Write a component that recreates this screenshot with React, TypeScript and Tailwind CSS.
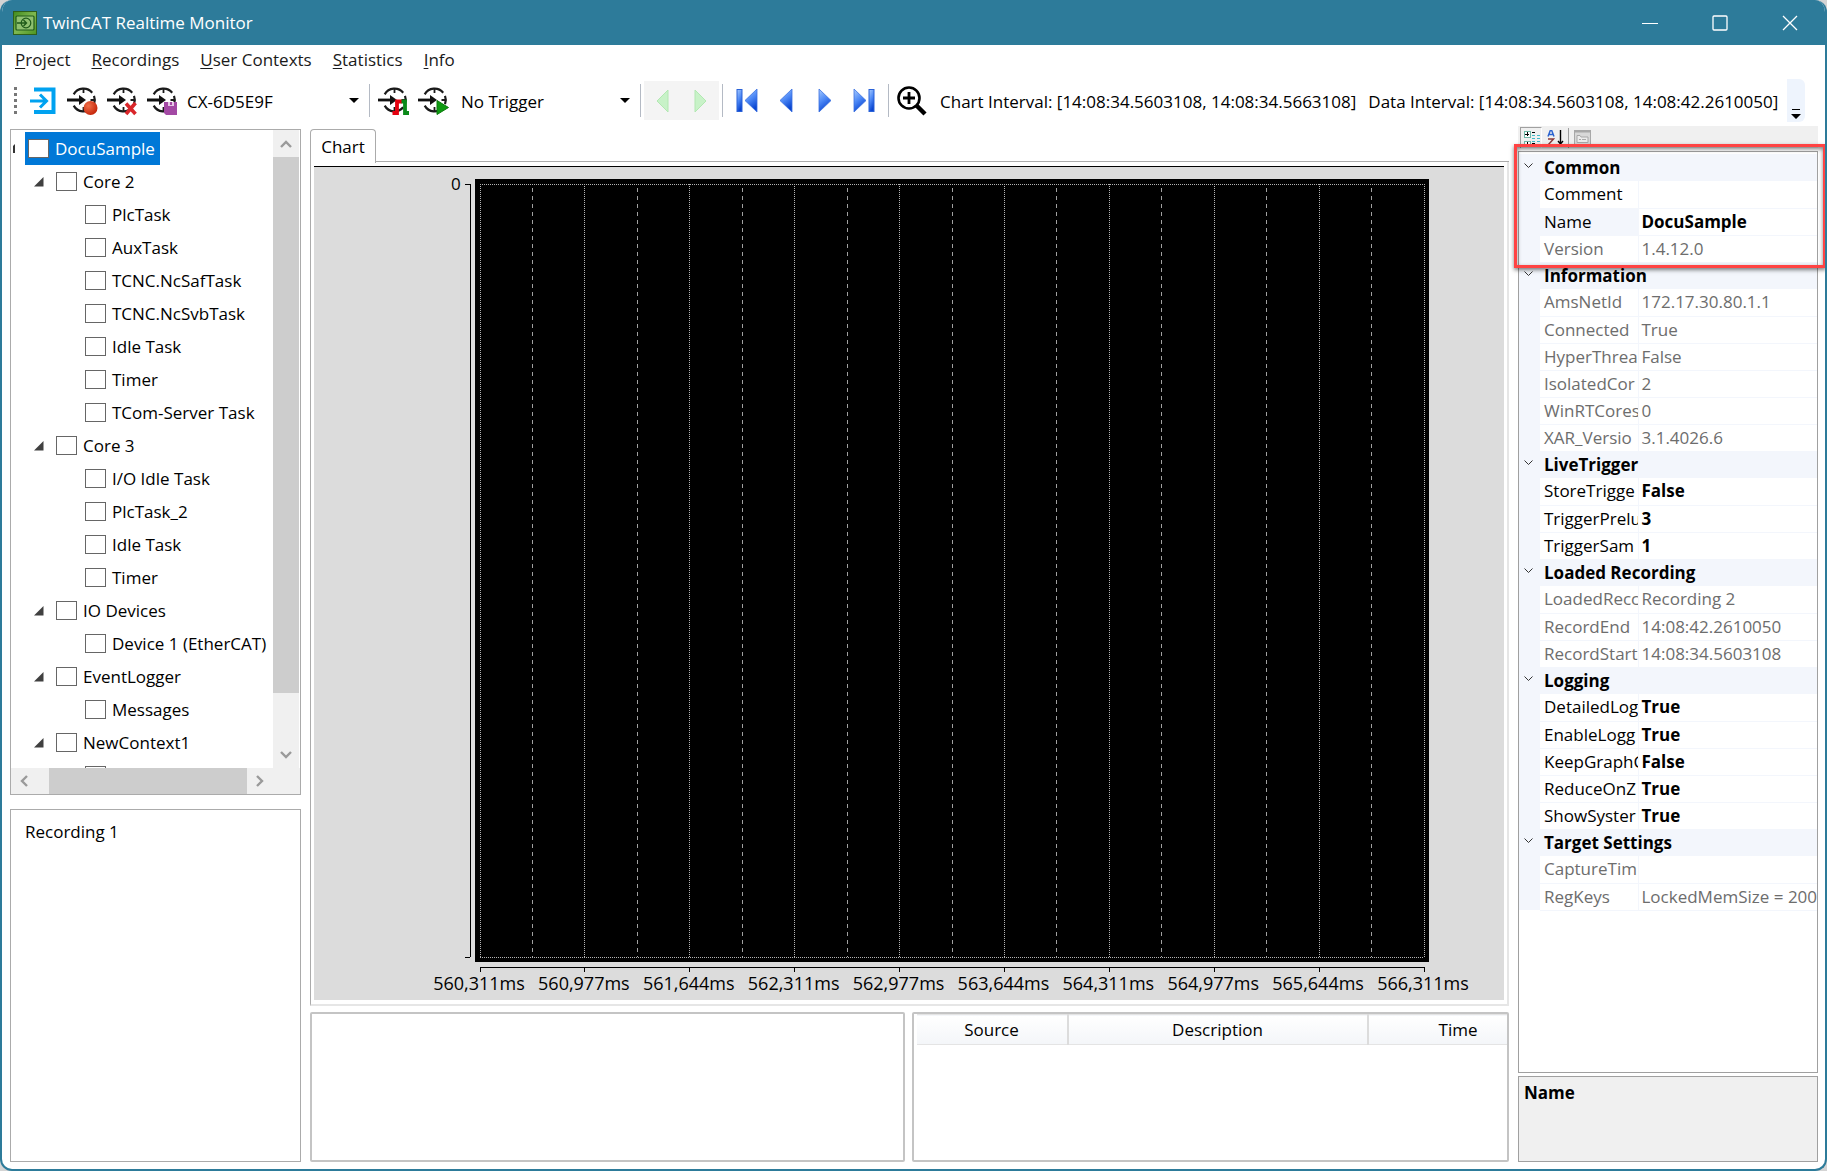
import { ReactNode, useState } from 'react';
import clsx from 'clsx';

type TTreeNode = { label: string; level: number; expanded?: boolean };
type TProperty = { name: string; value: string; readOnly?: boolean; selected?: boolean };

const MENU = ['Project', 'Recordings', 'User Contexts', 'Statistics', 'Info'];

const TREE: TTreeNode[] = [
  { label: 'Core 2', level: 1, expanded: true },
  { label: 'PlcTask', level: 2 },
  { label: 'AuxTask', level: 2 },
  { label: 'TCNC.NcSafTask', level: 2 },
  { label: 'TCNC.NcSvbTask', level: 2 },
  { label: 'Idle Task', level: 2 },
  { label: 'Timer', level: 2 },
  { label: 'TCom-Server Task', level: 2 },
  { label: 'Core 3', level: 1, expanded: true },
  { label: 'I/O Idle Task', level: 2 },
  { label: 'PlcTask_2', level: 2 },
  { label: 'Idle Task', level: 2 },
  { label: 'Timer', level: 2 },
  { label: 'IO Devices', level: 1, expanded: true },
  { label: 'Device 1 (EtherCAT)', level: 2 },
  { label: 'EventLogger', level: 1, expanded: true },
  { label: 'Messages', level: 2 },
  { label: 'NewContext1', level: 1, expanded: true },
  { label: '', level: 2 },
];

const TICKS = [
  '560,311ms',
  '560,977ms',
  '561,644ms',
  '562,311ms',
  '562,977ms',
  '563,644ms',
  '564,311ms',
  '564,977ms',
  '565,644ms',
  '566,311ms',
];

const PROPERTIES: { category: string; items: TProperty[] }[] = [
  {
    category: 'Common',
    items: [
      { name: 'Comment', value: '' },
      { name: 'Name', value: 'DocuSample', selected: true },
      { name: 'Version', value: '1.4.12.0', readOnly: true },
    ],
  },
  {
    category: 'Information',
    items: [
      { name: 'AmsNetId', value: '172.17.30.80.1.1', readOnly: true },
      { name: 'Connected', value: 'True', readOnly: true },
      { name: 'HyperThrea', value: 'False', readOnly: true },
      { name: 'IsolatedCor', value: '2', readOnly: true },
      { name: 'WinRTCores', value: '0', readOnly: true },
      { name: 'XAR_Versio', value: '3.1.4026.6', readOnly: true },
    ],
  },
  {
    category: 'LiveTrigger',
    items: [
      { name: 'StoreTrigge', value: 'False' },
      { name: 'TriggerPrelu', value: '3' },
      { name: 'TriggerSam', value: '1' },
    ],
  },
  {
    category: 'Loaded Recording',
    items: [
      { name: 'LoadedRecc', value: 'Recording 2', readOnly: true },
      { name: 'RecordEnd', value: '14:08:42.2610050', readOnly: true },
      { name: 'RecordStart', value: '14:08:34.5603108', readOnly: true },
    ],
  },
  {
    category: 'Logging',
    items: [
      { name: 'DetailedLog', value: 'True' },
      { name: 'EnableLogg', value: 'True' },
      { name: 'KeepGraphC', value: 'False' },
      { name: 'ReduceOnZ', value: 'True' },
      { name: 'ShowSyster', value: 'True' },
    ],
  },
  {
    category: 'Target Settings',
    items: [
      { name: 'CaptureTim', value: '', readOnly: true },
      { name: 'RegKeys', value: 'LockedMemSize = 200', readOnly: true },
    ],
  },
];

/* ---------- icons ---------- */

const AppIcon = () => (
  <svg width="24" height="24" viewBox="0 0 24 24" className="shrink-0">
    <defs>
      <linearGradient id="app" x1="0" y1="0" x2="1" y2="1">
        <stop offset="0" stopColor="#3f8a1c" />
        <stop offset="0.5" stopColor="#7fb850" />
        <stop offset="1" stopColor="#4c9420" />
      </linearGradient>
    </defs>
    <rect x="0.5" y="0.5" width="23" height="23" fill="url(#app)" stroke="#2f5f1a" />
    <rect x="3" y="5" width="18" height="14" rx="1" fill="#8fc070" stroke="#1f5a1a" strokeWidth="1.2" />
    <circle cx="13" cy="12" r="4.8" fill="none" stroke="#1f5a1a" strokeWidth="1.2" />
    <path d="M4 12h9M10.500 9l3 3-3 3" fill="none" stroke="#1f5a1a" strokeWidth="1.4" />
  </svg>
);

const LoginIcon = () => (
  <svg width="28" height="28" viewBox="0 0 28 28">
    <path d="M5 2.500h19.500v22.500H5" fill="none" stroke="#00a2f0" strokeWidth="4" />
    <path d="M1 14h16M11 7.500l6.500 6.500-6.500 6.500" fill="none" stroke="#00a2f0" strokeWidth="3" />
  </svg>
);

// target cross with an arrow, the badge sits in the lower right corner
const TargetIcon = ({ children }: { children: ReactNode }) => (
  <svg width="32" height="30" viewBox="0 0 32 30">
    <g fill="none" stroke="#1a1a1a" strokeWidth="2.200">
      <path d="M6.700 8.400A11.300 11.300 0 0 1 25.200 6.700" />
      <path d="M27 9.800A11.300 11.300 0 0 1 27 18.200" />
      <path d="M6.700 19.600A11.300 11.300 0 0 0 25.200 21.300" />
      <path d="M16.500 2v5M16.500 21v5M23.500 14h4.500" strokeWidth="1.800" />
    </g>
    <path d="M0 14h13" stroke="#111" strokeWidth="2.800" />
    <path d="M12 9L19 14l-7 5z" fill="#111" />
    {children}
  </svg>
);

const RecordBadge = () => (
  <>
    <defs>
      <radialGradient id="rec" cx="0.35" cy="0.35" r="0.7">
        <stop offset="0" stopColor="#f0704a" />
        <stop offset="1" stopColor="#c42408" />
      </radialGradient>
    </defs>
    <circle cx="23.500" cy="22" r="7" fill="url(#rec)" />
  </>
);

const DeleteBadge = () => (
  <path d="M19 17.500l9.500 10.500M28.500 17L19 28" stroke="#d9262a" strokeWidth="3.600" fill="none" />
);

const SaveBadge = () => (
  <>
    <path d="M17 16h13v13H19l-2-2z" fill="#a349a4" />
    <path d="M21 16h6v4h-6z" fill="#e6c8e6" />
    <path d="M23 16h2v3h-2z" fill="#a349a4" />
  </>
);

const TriggerBadge = () => (
  <>
    <path d="M14.500 27h4.500V15.500h5" fill="none" stroke="#e3000f" strokeWidth="3.800" />
    <path d="M23.500 15.500h3.500V27h4" fill="none" stroke="#0b8a1a" strokeWidth="3.800" />
  </>
);

const PlayBadge = () => <path d="M19 14.500L30.500 21.500 19 28.500z" fill="#0d9a10" stroke="#0a7a0c" />;

const BlueGradient = ({ id }: { id: string }) => (
  <defs>
    <linearGradient id={id} x1="0" y1="0" x2="0.400" y2="1">
      <stop offset="0" stopColor="#a8ccff" />
      <stop offset="0.550" stopColor="#4a86f5" />
      <stop offset="1" stopColor="#0a45d0" />
    </linearGradient>
  </defs>
);

const NavIcon = ({ id, d, bar }: { id: string; d: string; bar?: number }) => (
  <svg width="24" height="26" viewBox="0 0 24 26">
    <BlueGradient id={id} />
    {bar !== undefined && (
      <rect x={bar} y="1.500" width="5" height="22" fill={`url(#${id})`} stroke="#2a62d8" />
    )}
    <path d={d} fill={`url(#${id})`} stroke="#3a70e0" strokeWidth="0.800" />
  </svg>
);

const GreenArrow = ({ d }: { d: string }) => (
  <svg width="14" height="24" viewBox="0 0 14 24">
    <path d={d} fill="#c8f2c8" stroke="#b2e8b2" />
  </svg>
);

const ZoomInIcon = () => (
  <svg width="30" height="30" viewBox="0 0 30 30" fill="none" stroke="#000">
    <circle cx="12" cy="12" r="10.500" strokeWidth="2.600" />
    <path d="M12 6v12M6 12h12" strokeWidth="2.800" />
    <path d="M19.500 19.500l8.500 8.500" strokeWidth="4.400" />
  </svg>
);

const Chevron = ({ d }: { d: string }) => (
  <svg width="14" height="14" viewBox="0 0 14 14" fill="none" stroke="#9a9a9a" strokeWidth="2.400">
    <path d={d} />
  </svg>
);

/* ---------- small parts ---------- */

const Separator = () => <span className="h-[33px] w-px shrink-0 bg-[#b4bac4]" />;

const ToolButton = ({ label, children }: { label: string; children: ReactNode }) => (
  <button aria-label={label} className="flex h-8 w-8 shrink-0 items-center justify-center">
    {children}
  </button>
);

const Combo = ({ label, value, className }: { label: string; value: string; className: string }) => (
  <div className={clsx('relative flex shrink-0 items-center', className)}>
    <select aria-label={label} className="w-full appearance-none bg-transparent pt-[2px] outline-none">
      <option>{value}</option>
    </select>
    <svg width="10" height="6" className="pointer-events-none absolute right-0">
      <path d="M0 0h10L5 5z" />
    </svg>
  </div>
);

const CheckBox = ({ id, label }: { id: string; label: string }) => (
  <input
    id={id}
    type="checkbox"
    aria-label={label || 'Context'}
    className="h-[19px] w-[21px] shrink-0 appearance-none border border-[#666] bg-white"
  />
);

const TitleBar = () => (
  <header className="flex h-[45px] shrink-0 items-center bg-[#2d7b9a] pl-[11px] text-white">
    <AppIcon />
    <h1 className="ml-[6px] flex-1">TwinCAT Realtime Monitor</h1>
    <button aria-label="Minimize" className="flex h-full w-[70px] items-center justify-center">
      <svg width="16" height="16" fill="none" stroke="#fff">
        <path d="M0 8.500h16" />
      </svg>
    </button>
    <button aria-label="Maximize" className="flex h-full w-[70px] items-center justify-center">
      <svg width="16" height="16" fill="none" stroke="#fff" strokeWidth="1.300">
        <rect x="1" y="1" width="14" height="14" rx="1" />
      </svg>
    </button>
    <button aria-label="Close" className="flex h-full w-[70px] items-center justify-center">
      <svg width="16" height="16" fill="none" stroke="#fff" strokeWidth="1.300">
        <path d="M1 1l14 14M15 1L1 15" />
      </svg>
    </button>
  </header>
);

const MenuBar = () => (
  <nav className="flex h-[30px] shrink-0 items-center gap-[21px] pl-[13px] text-[#1a1a1a]">
    {MENU.map((item) => (
      <button key={item}>
        <span className="underline underline-offset-2">{item[0]}</span>
        {item.slice(1)}
      </button>
    ))}
  </nav>
);

const ToolBar = () => (
  <div className="flex h-[51px] shrink-0 items-center pl-3" role="toolbar">
    <span className="h-[27px] w-[3px] shrink-0 bg-[repeating-linear-gradient(#777_0_3px,transparent_3px_6px)]" />
    <div className="ml-[10px] flex gap-2">
      <ToolButton label="Connect">
        <LoginIcon />
      </ToolButton>
      <ToolButton label="Start recording">
        <TargetIcon>
          <RecordBadge />
        </TargetIcon>
      </ToolButton>
      <ToolButton label="Delete recording">
        <TargetIcon>
          <DeleteBadge />
        </TargetIcon>
      </ToolButton>
      <ToolButton label="Save recording">
        <TargetIcon>
          <SaveBadge />
        </TargetIcon>
      </ToolButton>
    </div>
    <Combo label="Target" value="CX-6D5E9F" className="ml-2 mr-[10px] w-[172px]" />
    <Separator />
    <div className="ml-2 flex gap-2">
      <ToolButton label="Set trigger">
        <TargetIcon>
          <TriggerBadge />
        </TargetIcon>
      </ToolButton>
      <ToolButton label="Start trigger">
        <TargetIcon>
          <PlayBadge />
        </TargetIcon>
      </ToolButton>
    </div>
    <Combo label="Trigger" value="No Trigger" className="ml-[11px] mr-[10px] w-[169px]" />
    <Separator />
    <div className="mx-[3px] flex h-[39px] w-[75px] shrink-0 items-center justify-around bg-[#f4f4f4]">
      <button aria-label="Previous trigger" disabled>
        <GreenArrow d="M12 1v22L1 12z" />
      </button>
      <button aria-label="Next trigger" disabled>
        <GreenArrow d="M2 1v22l11-11z" />
      </button>
    </div>
    <Separator />
    <div className="mx-2 flex gap-[7px]">
      <ToolButton label="First">
        <NavIcon id="nav1" bar={2} d="M22 1v23L10 12.500z" />
      </ToolButton>
      <ToolButton label="Previous">
        <NavIcon id="nav2" d="M18 1v23L6 12.500z" />
      </ToolButton>
      <ToolButton label="Next">
        <NavIcon id="nav3" d="M6 1v23l12-11.500z" />
      </ToolButton>
      <ToolButton label="Last">
        <NavIcon id="nav4" bar={17} d="M2 1v23l12-11.500z" />
      </ToolButton>
    </div>
    <Separator />
    <div className="ml-[7px]">
      <ToolButton label="Zoom in">
        <ZoomInIcon />
      </ToolButton>
    </div>
    <span className="ml-3 whitespace-nowrap pt-[2px]">
      Chart Interval: [14:08:34.5603108, 14:08:34.5663108]
    </span>
    <span className="ml-3 whitespace-nowrap pt-[2px]">
      Data Interval: [14:08:34.5603108, 14:08:42.2610050]
    </span>
    <button
      aria-label="Toolbar options"
      className="ml-auto mr-5 flex h-[43px] w-[18px] items-end justify-center rounded-r-md bg-[#eef4fd] pb-[3px]"
    >
      <svg width="10" height="10">
        <path d="M1 0h8v1H1zM0 5h10L5 10z" />
      </svg>
    </button>
  </div>
);

const ContextTree = () => (
  <section className="flex min-h-0 flex-1 flex-col border border-[#ababab]">
    <div className="flex min-h-0 flex-1">
      <ul className="min-w-0 flex-1 overflow-hidden pt-[2px]">
        <li className="flex h-[33px] items-center">
          <svg width="14" height="10" viewBox="0 0 14 10" className="shrink-0">
            <path d="M4 0v9H2V2z" fill="#333" />
          </svg>
          <div className="flex h-[33px] items-center gap-[6px] bg-[#0078d7] pl-[3px] pr-[5px] text-white">
            <CheckBox id="node-root" label="DocuSample" />
            <label htmlFor="node-root">DocuSample</label>
          </div>
        </li>
        {TREE.map(({ label, level, expanded }, index) => (
          <li
            key={index}
            className={clsx('flex h-[33px] items-center gap-[6px]', level === 1 ? 'pl-[23px]' : 'pl-[74px]')}
          >
            {expanded && (
              <svg width="10" height="10" className="mr-[6px] shrink-0">
                <path d="M9.500 0v9.500H0z" fill="#404040" />
              </svg>
            )}
            <CheckBox id={`node-${index}`} label={label} />
            <label htmlFor={`node-${index}`} className="whitespace-nowrap">
              {label}
            </label>
          </li>
        ))}
      </ul>
      <div className="mr-px flex w-[26px] shrink-0 flex-col bg-[#f0f0f0]">
        <button aria-label="Scroll up" className="flex h-[27px] items-center justify-center">
          <Chevron d="M2 10l5-5 5 5" />
        </button>
        <div className="flex-[536] bg-[#cdcdcd]" />
        <div className="flex-[49]" />
        <button aria-label="Scroll down" className="flex h-[26px] items-center justify-center">
          <Chevron d="M2 4l5 5 5-5" />
        </button>
      </div>
    </div>
    <div className="flex h-[26px] shrink-0 bg-[#f0f0f0] pr-[27px]">
      <button aria-label="Scroll left" className="flex w-[26px] items-center justify-center">
        <Chevron d="M10 2L5 7l5 5" />
      </button>
      <div className="flex-[12]" />
      <div className="flex-[198] bg-[#cdcdcd]" />
      <button aria-label="Scroll right" className="flex w-[26px] items-center justify-center">
        <Chevron d="M4 2l5 5-5 5" />
      </button>
    </div>
  </section>
);

const Chart = () => {
  const last = TICKS.length - 1;
  const at = (i: number) => `${(i / last) * 100}%`;

  return (
    <div className="flex min-h-0 flex-1 flex-col border-t border-black bg-[#dcdcdc] pb-[38px] pl-[161px] pr-[75px] pt-3">
      <div className="min-h-0 flex-1 bg-black p-[5px]">
        <svg width="100%" height="100%" className="block overflow-visible" shapeRendering="crispEdges">
          <g stroke="#b4b4b4" strokeDasharray="1 1">
            <line x1="0" x2="100%" y1="0" y2="0" />
            <line x1="0" x2="100%" y1="100%" y2="100%" />
            {TICKS.map((tick, i) => (
              <line key={tick} x1={at(i)} x2={at(i)} y1="0" y2="100%" />
            ))}
          </g>
          <g stroke="#a0a0a0" strokeDasharray="4 4">
            {TICKS.slice(1).map((tick, i) => (
              <line key={tick} x1={at(i + 0.5)} x2={at(i + 0.5)} y1="4" y2="100%" />
            ))}
          </g>
          {/* value axis */}
          <g stroke="#000">
            <line x1="-10" x2="-10" y1="0" y2="100%" />
            <line x1="-15" x2="-10" y1="0" y2="0" />
            <line x1="-15" x2="-10" y1="100%" y2="100%" />
          </g>
          <text x="-29" y="6" className="text-[17px]">
            0
          </text>
        </svg>
      </div>
      <div className="h-0 px-[5px]">
        <svg width="100%" height="34" className="block overflow-visible">
          <g stroke="#000" shapeRendering="crispEdges">
            <line x1="0" x2="100%" y1="5" y2="5" />
            {TICKS.map((tick, i) => (
              <line key={tick} x1={at(i)} x2={at(i)} y1="5" y2="10" />
            ))}
          </g>
          {TICKS.map((tick, i) => (
            <text key={tick} x={at(i)} y="28" dx="-1" textAnchor="middle" className="text-[18px]">
              {tick}
            </text>
          ))}
        </svg>
      </div>
    </div>
  );
};

const ChartTabs = () => (
  <section className="flex min-h-0 flex-1 flex-col">
    <div className="flex h-[33px] shrink-0" role="tablist">
      <button
        role="tab"
        aria-selected="true"
        className="h-[34px] w-[66px] rounded-t-sm border border-b-0 border-[#ababab] bg-white"
      >
        Chart
      </button>
      <div className="flex-1 border-b border-[#ababab]" />
    </div>
    <div className="flex min-h-0 flex-1 flex-col border-b-2 border-l border-r-2 border-[#e6e6e6] border-l-[#ababab] px-[3px] pb-1 pt-1">
      <Chart />
    </div>
  </section>
);

const MessageTable = () => (
  <div className="flex-1 overflow-hidden rounded-xs border-2 border-[#c4c4c4] pl-[3px]">
    <table className="w-full min-w-[631px] table-fixed">
      <thead>
        <tr className="h-[30px] border-y border-[#e4e4e4] bg-linear-to-b from-white to-[#f4f6f9]">
          <th className="w-[151px] border-r-2 border-[#dcdcdc] font-normal">Source</th>
          <th className="w-[300px] border-r-2 border-[#dcdcdc] font-normal">Description</th>
          <th className="font-normal">Time</th>
        </tr>
      </thead>
    </table>
  </div>
);

const PropertyGrid = () => (
  <aside className="flex w-[300px] shrink-0 flex-col">
    <div className="flex h-[22px] shrink-0 items-start bg-[#f0f0f0]">
      <button
        aria-label="Categorized"
        className="ml-[2px] mt-px flex h-[21px] w-[22px] items-start justify-center border border-b-0 border-[#a0a0a0] border-r-white pt-[2px]"
      >
        <svg width="17" height="17" fill="none" shapeRendering="crispEdges">
          <path d="M1 1h6v6H1zM1 11h6v6H1z" fill="#fff" stroke="#70b8a8" />
          <path d="M2 4.500h4M4.500 2v4M2 14.500h4M4.500 12v4M9 2.500h3M9 13.500h3" stroke="#000" />
          <path d="M9 5.500h3M14 5.500h3M9 8.500h3M14 8.500h3M9 11.500h3M14 11.500h3M14 14.500h3" stroke="#40b8c8" />
        </svg>
      </button>
      <button aria-label="Alphabetical" className="mt-1 flex w-[26px] justify-center">
        <svg width="17" height="18" fill="none">
          <path d="M1 6.500L3.500 0h1L7 6.500M2 4.500h4" stroke="#2a62d0" strokeWidth="1.500" />
          <path d="M1 9h5.500L1 15h6" stroke="#8a3a3a" strokeWidth="1.500" />
          <path d="M13.500 0v14M11 11l2.500 3 2.500-3" stroke="#000" strokeWidth="1.400" />
        </svg>
      </button>
      <span className="mt-[2px] h-[20px] w-px bg-[#a0a0a0]" />
      <button aria-label="Property pages" className="ml-[5px] mt-1" disabled>
        <svg width="17" height="16" fill="none" stroke="#a8a8a8">
          <rect x="0.500" y="0.500" width="16" height="16" fill="#d8d8d8" />
          <path d="M1 1.500h15" strokeWidth="2" />
          <path d="M3 12.500V5.500h3l1 1.500h7v5.500zM5 9.500h2M8 9.500h4" fill="#ececec" />
        </svg>
      </button>
    </div>

    <div className="relative mt-[3px] flex-1 border border-[#a0a0a0] pt-[2px]">
      <table className="w-full table-fixed">
        <colgroup>
          <col className="w-[21px]" />
          <col className="w-[98px]" />
          <col />
        </colgroup>
        {PROPERTIES.map(({ category, items }) => (
          <tbody key={category}>
            <tr className="h-[27px] bg-[#f3f6fc]">
              <td className="pl-[5px] align-top">
                <svg width="9" height="18" fill="none" stroke="#333">
                  <path d="M0.500 9.500l4 4 4-4" />
                </svg>
              </td>
              <th colSpan={2} className="p-0 pl-1 text-left font-bold">
                {category}
              </th>
            </tr>
            {items.map(({ name, value, readOnly, selected }) => (
              <tr key={name} className={clsx('h-[27px]', readOnly && 'text-[#6d6d6d]')}>
                <td className="bg-[#f3f6fc]" />
                <td
                  className={clsx(
                    'overflow-hidden whitespace-nowrap border-b border-r border-[#f3f6fc] p-0 pl-1',
                    selected && 'bg-[#f3f6fc]',
                  )}
                >
                  {name}
                </td>
                <td
                  className={clsx(
                    'overflow-hidden whitespace-nowrap border-b border-[#f3f6fc] p-0 pl-[3px]',
                    !readOnly && 'font-bold',
                  )}
                >
                  {value}
                </td>
              </tr>
            ))}
          </tbody>
        ))}
      </table>
      {/* marks the Common category */}
      <div className="pointer-events-none absolute -left-[5px] -right-[9px] -top-2 h-[124px] border-3 border-[#ff4343] shadow-[0_2px_4px_rgba(0,0,0,0.5),inset_0_2px_4px_rgba(0,0,0,0.5)]" />
    </div>

    <div className="mt-[3px] h-[86px] shrink-0 border border-[#a0a0a0] bg-[#f0f0f0] px-[5px] pt-1 font-bold">
      Name
    </div>
  </aside>
);

const App = () => {
  const [recordings] = useState(['Recording 1']);

  return (
    <div className="h-screen bg-[#d4d4d4] font-['Open_Sans','Noto_Sans',sans-serif] text-[17px] leading-6 text-black">
      <div className="flex h-full flex-col overflow-hidden rounded-xl border-2 border-t-0 border-[#2d7b9a] bg-white">
        <TitleBar />
        <MenuBar />
        <ToolBar />
        <main className="flex min-h-0 flex-1 pb-[7px] pl-2 pr-[7px]">
          <div className="mr-[9px] flex w-[291px] shrink-0 flex-col gap-[14px] pt-[3px]">
            <ContextTree />
            <ul className="h-[353px] shrink-0 border border-[#ababab] px-[14px] py-[10px]">
              {recordings.map((name) => (
                <li key={name}>{name}</li>
              ))}
            </ul>
          </div>
          <div className="mr-[9px] flex min-w-0 flex-1 flex-col pt-[3px]">
            <ChartTabs />
            <div className="mt-[6px] flex h-[150px] shrink-0 gap-[7px]">
              <div className="flex-1 rounded-xs border-2 border-[#c4c4c4]" />
              <MessageTable />
            </div>
          </div>
          <PropertyGrid />
        </main>
      </div>
    </div>
  );
};

export default App;
